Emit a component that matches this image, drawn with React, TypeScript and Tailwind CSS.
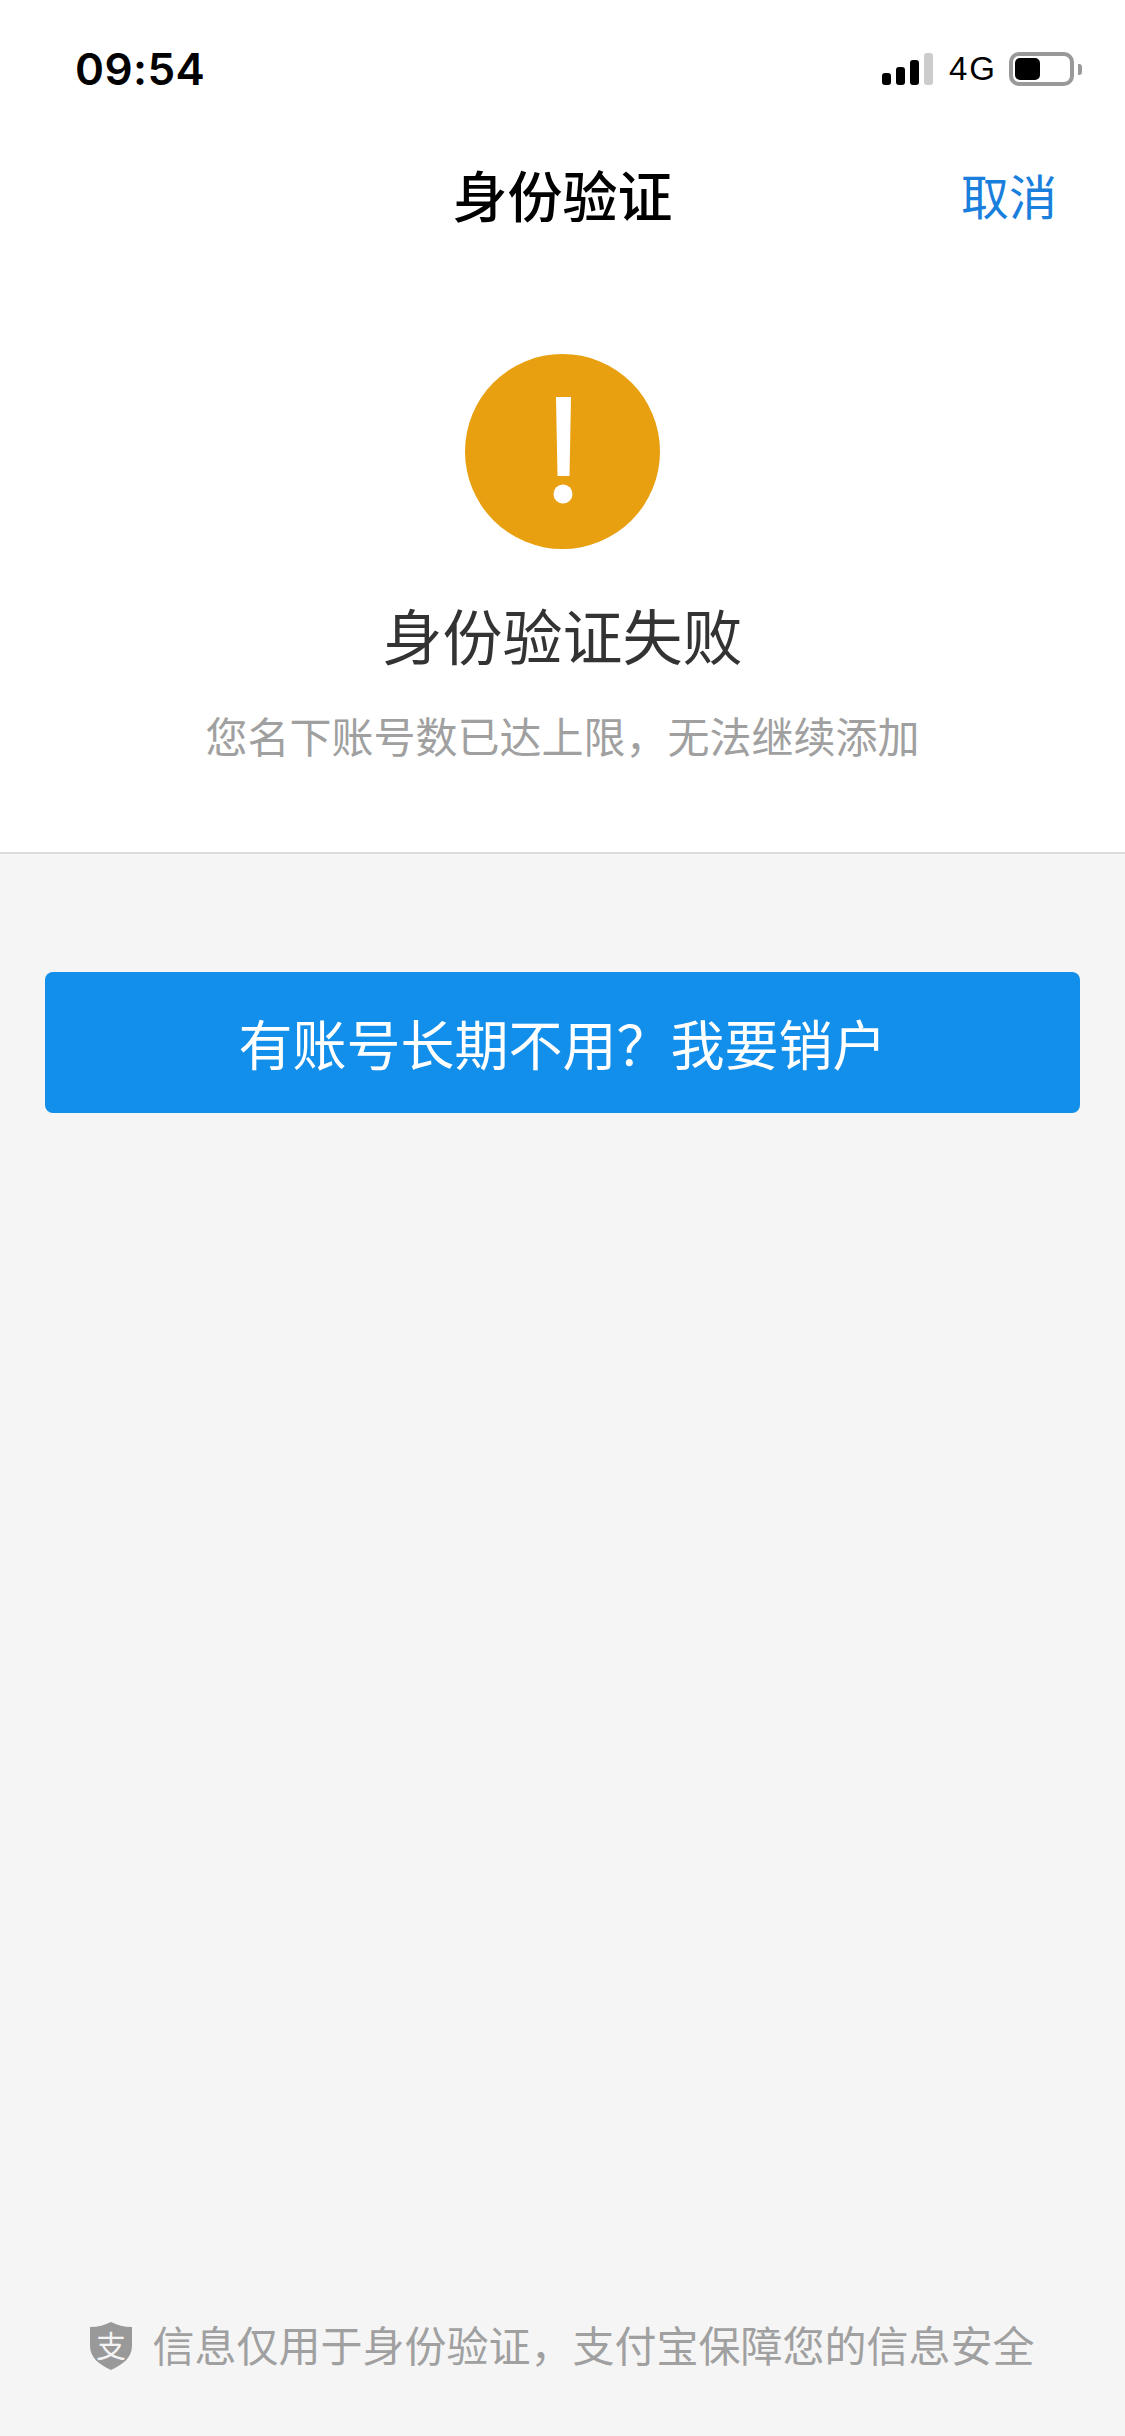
const cjk = "font-['Noto_Sans_CJK_SC','Noto_Sans',sans-serif]";

function StatusBar() {
  return (
    <div className="h-[150px] flex items-start justify-between pt-[46px] pl-[75px] pr-[43px] text-black">
      <span className="font-['Inter',sans-serif] font-semibold text-[44px] leading-[46px] tracking-[0.4px]">09:54</span>
      <div className="flex items-center h-[34px] mt-[6px]">
        <div className="flex items-end gap-[5px] h-[32px]">
          <div className="w-[9px] h-[12px] rounded-[3px] bg-black" />
          <div className="w-[9px] h-[18px] rounded-[3px] bg-black" />
          <div className="w-[9px] h-[25px] rounded-[3px] bg-black" />
          <div className="w-[9px] h-[32px] rounded-[3px] bg-[#cccccc]" />
        </div>
        <span className="ml-[16px] font-['Liberation_Sans',sans-serif] text-[33px] leading-[34px] tracking-[2px]">4G</span>
        <div className="ml-[12px] w-[65px] h-[34px] rounded-[10px] border-[4px] border-[#999999] p-[2px]">
          <div className="w-[25px] h-[22px] rounded-[5px] bg-black" />
        </div>
        <div className="ml-[4px] w-[4px] h-[11px] rounded-r-[3px] bg-[#999999]" />
      </div>
    </div>
  );
}

function WarningIcon() {
  return (
    <svg width="195" height="195" viewBox="0 0 195 195">
      <circle cx="97.5" cy="97.5" r="97.5" fill="#e8a010" />
      <path d="M91 43h15l-1.500 79h-12z" fill="#ffffff" />
      <circle cx="98" cy="140" r="9.500" fill="#ffffff" />
    </svg>
  );
}

function ShieldLogo() {
  return (
    <svg width="42" height="48" viewBox="0 0 42 48">
      <path d="M21 0C27 3 34 5 42 5V24C42 36 32 43 21 48C10 43 0 36 0 24V5C8 5 15 3 21 0Z" fill="#999999" />
      <text x="21" y="35" textAnchor="middle" fontSize="30" fill="#f4f4f5" fontFamily="Noto Sans CJK SC, sans-serif">支</text>
    </svg>
  );
}

export default function App() {
  return (
    <div className={`${cjk} w-[1125px] h-[2436px] flex flex-col bg-[#f5f5f6]`}>
      <div className="bg-white border-b-2 border-[#dcdcdc] pb-[96px]">
        <StatusBar />

        {/* nav bar */}
        <div className="relative h-[94px] flex items-start justify-center">
          <h1 className="text-[55px] leading-[86px] font-medium text-black">身份验证</h1>
          <button className="absolute right-[68px] top-0 text-[48px] leading-[88px] text-[#1a7fdc]">取消</button>
        </div>

        <div className="mt-[110px] flex flex-col items-center">
          <WarningIcon />
          <h2 className="mt-[55px] text-[60px] leading-[60px] text-[#333333]">身份验证失败</h2>
          <p className="mt-[50px] text-[42px] leading-[42px] text-[#a0a0a0]">您名下账号数已达上限，无法继续添加</p>
        </div>
      </div>

      <button className="mt-[118px] mx-[45px] h-[141px] rounded-[8px] bg-[#128eeb] text-white text-[54px] leading-[60px]">
        有账号长期不用？我要销户
      </button>

      <div className="mt-auto pb-[66px] flex items-center justify-center gap-[20px]">
        <ShieldLogo />
        <span className="pb-[4px] text-[42px] leading-[44px] text-[#a0a0a0]">信息仅用于身份验证，支付宝保障您的信息安全</span>
      </div>
    </div>
  );
}
